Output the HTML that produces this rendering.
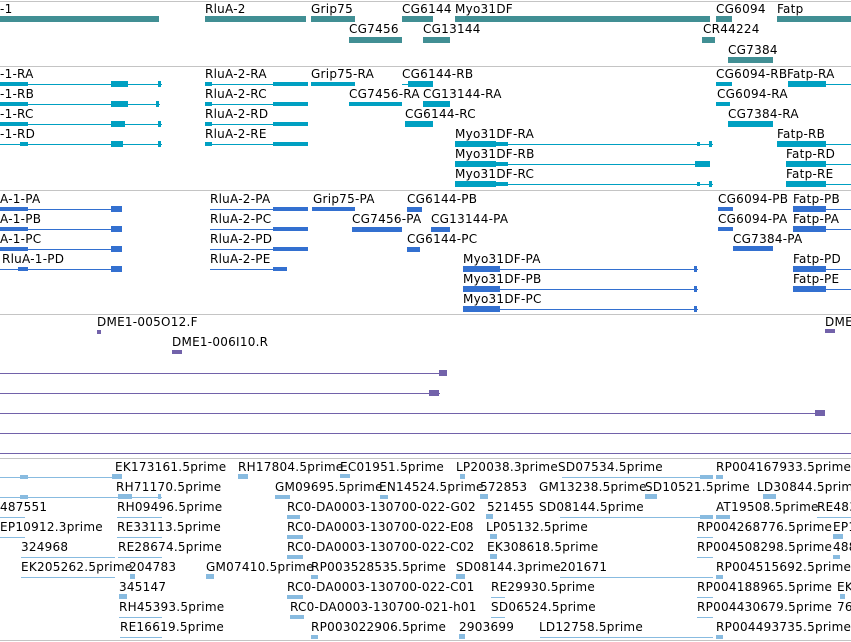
<!DOCTYPE html>
<html><head><meta charset="utf-8"><style>
body{margin:0;width:851px;height:642px;overflow:hidden;background:#fff;position:relative;font-family:"DejaVu Sans","Liberation Sans",sans-serif}
i{position:absolute;display:block}
s{position:absolute;font-size:12px;line-height:14px;letter-spacing:0.25px;white-space:nowrap;text-decoration:none;color:#000}
.sep{left:0;width:851px;height:1px;background:#c4c4c4}
.g{background:#418f94}.r{background:#00a0c2}.p{background:#3370d0}.v{background:#7262aa}.e{background:#88bbe0}
</style></head><body>
<i class="sep" style="top:1px"></i>
<i class="sep" style="top:66px"></i>
<i class="sep" style="top:190px"></i>
<i class="sep" style="top:314px"></i>
<i class="sep" style="top:458px"></i>
<i class="sep" style="top:640px"></i>

<!-- genes -->
<s style="left:0;top:2px">-1</s><s style="left:205px;top:2px">RluA-2</s><s style="left:311px;top:2px">Grip75</s><s style="left:402px;top:2px">CG6144</s><s style="left:455px;top:2px">Myo31DF</s><s style="left:716px;top:2px">CG6094</s><s style="left:777px;top:2px">Fatp</s>
<s style="left:349px;top:22px">CG7456</s><s style="left:423px;top:22px">CG13144</s><s style="left:703px;top:22px">CR44224</s><s style="left:728px;top:43px">CG7384</s>
<i class="g" style="left:0;top:16px;width:159px;height:6px"></i>
<i class="g" style="left:205px;top:16px;width:101px;height:6px"></i>
<i class="g" style="left:311px;top:16px;width:44px;height:6px"></i>
<i class="g" style="left:402px;top:16px;width:31px;height:6px"></i>
<i class="g" style="left:455px;top:16px;width:255px;height:6px"></i>
<i class="g" style="left:716px;top:16px;width:16px;height:6px"></i>
<i class="g" style="left:777px;top:16px;width:74px;height:6px"></i>
<i class="g" style="left:349px;top:37px;width:53px;height:6px"></i>
<i class="g" style="left:423px;top:37px;width:27px;height:6px"></i>
<i class="g" style="left:702px;top:37px;width:13px;height:6px"></i>
<i class="g" style="left:728px;top:57px;width:45px;height:6px"></i>

<!-- transcripts -->
<s style="left:0;top:67px">-1-RA</s><s style="left:205px;top:67px">RluA-2-RA</s><s style="left:311px;top:67px">Grip75-RA</s><s style="left:402px;top:67px">CG6144-RB</s><s style="left:716px;top:67px">CG6094-RB</s><s style="left:787px;top:67px">Fatp-RA</s>
<s style="left:0;top:87px">-1-RB</s><s style="left:205px;top:87px">RluA-2-RC</s><s style="left:349px;top:87px">CG7456-RA</s><s style="left:423px;top:87px">CG13144-RA</s><s style="left:717px;top:87px">CG6094-RA</s>
<s style="left:0;top:107px">-1-RC</s><s style="left:205px;top:107px">RluA-2-RD</s><s style="left:405px;top:107px">CG6144-RC</s><s style="left:728px;top:107px">CG7384-RA</s>
<s style="left:0;top:127px">-1-RD</s><s style="left:205px;top:127px">RluA-2-RE</s><s style="left:455px;top:127px">Myo31DF-RA</s><s style="left:777px;top:127px">Fatp-RB</s>
<s style="left:455px;top:147px">Myo31DF-RB</s><s style="left:786px;top:147px">Fatp-RD</s>
<s style="left:455px;top:167px">Myo31DF-RC</s><s style="left:786px;top:167px">Fatp-RE</s>

<i class="r" style="left:0;top:84px;width:162px;height:1px"></i><i class="r" style="left:0;top:82px;width:28px;height:4px"></i><i class="r" style="left:111px;top:81px;width:17px;height:6px"></i><i class="r" style="left:158px;top:81px;width:3px;height:6px"></i>
<i class="r" style="left:0;top:104px;width:160px;height:1px"></i><i class="r" style="left:0;top:102px;width:28px;height:4px"></i><i class="r" style="left:111px;top:101px;width:17px;height:6px"></i><i class="r" style="left:156px;top:101px;width:3px;height:6px"></i>
<i class="r" style="left:0;top:124px;width:162px;height:1px"></i><i class="r" style="left:0;top:122px;width:28px;height:4px"></i><i class="r" style="left:111px;top:121px;width:14px;height:6px"></i><i class="r" style="left:158px;top:121px;width:3px;height:6px"></i>
<i class="r" style="left:0;top:144px;width:162px;height:1px"></i><i class="r" style="left:20px;top:142px;width:8px;height:4px"></i><i class="r" style="left:111px;top:141px;width:12px;height:6px"></i><i class="r" style="left:158px;top:141px;width:3px;height:6px"></i>
<i class="r" style="left:205px;top:84px;width:103px;height:1px"></i><i class="r" style="left:205px;top:82px;width:7px;height:4px"></i><i class="r" style="left:273px;top:82px;width:35px;height:4px"></i>
<i class="r" style="left:205px;top:104px;width:103px;height:1px"></i><i class="r" style="left:205px;top:102px;width:7px;height:4px"></i><i class="r" style="left:273px;top:102px;width:35px;height:4px"></i>
<i class="r" style="left:205px;top:124px;width:103px;height:1px"></i><i class="r" style="left:205px;top:122px;width:7px;height:4px"></i><i class="r" style="left:273px;top:122px;width:35px;height:4px"></i>
<i class="r" style="left:205px;top:144px;width:103px;height:1px"></i><i class="r" style="left:205px;top:142px;width:7px;height:4px"></i><i class="r" style="left:273px;top:142px;width:35px;height:4px"></i>
<i class="r" style="left:311px;top:82px;width:44px;height:4px"></i>
<i class="r" style="left:402px;top:84px;width:31px;height:1px"></i><i class="r" style="left:408px;top:81px;width:25px;height:6px"></i>
<i class="r" style="left:349px;top:102px;width:53px;height:4px"></i><i class="r" style="left:423px;top:101px;width:27px;height:6px"></i>
<i class="r" style="left:405px;top:121px;width:28px;height:6px"></i>
<i class="r" style="left:716px;top:82px;width:16px;height:4px"></i><i class="r" style="left:716px;top:102px;width:14px;height:4px"></i>
<i class="r" style="left:728px;top:121px;width:45px;height:6px"></i>
<i class="r" style="left:788px;top:84px;width:63px;height:1px"></i><i class="r" style="left:788px;top:81px;width:38px;height:6px"></i>
<i class="r" style="left:777px;top:144px;width:74px;height:1px"></i><i class="r" style="left:777px;top:141px;width:49px;height:6px"></i>
<i class="r" style="left:786px;top:164px;width:65px;height:1px"></i><i class="r" style="left:786px;top:161px;width:40px;height:6px"></i>
<i class="r" style="left:786px;top:184px;width:65px;height:1px"></i><i class="r" style="left:786px;top:181px;width:40px;height:6px"></i>
<i class="r" style="left:455px;top:144px;width:258px;height:1px"></i><i class="r" style="left:455px;top:141px;width:41px;height:6px"></i><i class="r" style="left:496px;top:142px;width:12px;height:4px"></i><i class="r" style="left:697px;top:142px;width:3px;height:4px"></i><i class="r" style="left:709px;top:141px;width:3px;height:6px"></i>
<i class="r" style="left:455px;top:164px;width:255px;height:1px"></i><i class="r" style="left:455px;top:161px;width:41px;height:6px"></i><i class="r" style="left:496px;top:162px;width:12px;height:4px"></i><i class="r" style="left:695px;top:161px;width:15px;height:6px"></i>
<i class="r" style="left:455px;top:184px;width:258px;height:1px"></i><i class="r" style="left:455px;top:181px;width:41px;height:6px"></i><i class="r" style="left:496px;top:182px;width:12px;height:4px"></i><i class="r" style="left:697px;top:182px;width:3px;height:4px"></i><i class="r" style="left:709px;top:181px;width:3px;height:6px"></i>

<!-- proteins -->
<s style="left:0;top:192px">A-1-PA</s><s style="left:210px;top:192px">RluA-2-PA</s><s style="left:313px;top:192px">Grip75-PA</s><s style="left:407px;top:192px">CG6144-PB</s><s style="left:718px;top:192px">CG6094-PB</s><s style="left:793px;top:192px">Fatp-PB</s>
<s style="left:0;top:212px">A-1-PB</s><s style="left:210px;top:212px">RluA-2-PC</s><s style="left:352px;top:212px">CG7456-PA</s><s style="left:431px;top:212px">CG13144-PA</s><s style="left:718px;top:212px">CG6094-PA</s><s style="left:793px;top:212px">Fatp-PA</s>
<s style="left:0;top:232px">A-1-PC</s><s style="left:210px;top:232px">RluA-2-PD</s><s style="left:407px;top:232px">CG6144-PC</s><s style="left:733px;top:232px">CG7384-PA</s>
<s style="left:2px;top:252px">RluA-1-PD</s><s style="left:210px;top:252px">RluA-2-PE</s><s style="left:463px;top:252px">Myo31DF-PA</s><s style="left:793px;top:252px">Fatp-PD</s>
<s style="left:463px;top:272px">Myo31DF-PB</s><s style="left:793px;top:272px">Fatp-PE</s>
<s style="left:463px;top:292px">Myo31DF-PC</s>

<i class="p" style="left:0;top:209px;width:122px;height:1px"></i><i class="p" style="left:0;top:207px;width:28px;height:4px"></i><i class="p" style="left:111px;top:206px;width:11px;height:6px"></i>
<i class="p" style="left:0;top:229px;width:122px;height:1px"></i><i class="p" style="left:0;top:227px;width:28px;height:4px"></i><i class="p" style="left:111px;top:226px;width:11px;height:6px"></i>
<i class="p" style="left:0;top:249px;width:122px;height:1px"></i><i class="p" style="left:0;top:247px;width:28px;height:4px"></i><i class="p" style="left:111px;top:246px;width:11px;height:6px"></i>
<i class="p" style="left:0;top:269px;width:122px;height:1px"></i><i class="p" style="left:18px;top:267px;width:10px;height:4px"></i><i class="p" style="left:111px;top:266px;width:11px;height:6px"></i>
<i class="p" style="left:210px;top:209px;width:98px;height:1px"></i><i class="p" style="left:273px;top:207px;width:35px;height:4px"></i>
<i class="p" style="left:210px;top:229px;width:98px;height:1px"></i><i class="p" style="left:273px;top:227px;width:35px;height:4px"></i>
<i class="p" style="left:210px;top:249px;width:98px;height:1px"></i><i class="p" style="left:273px;top:247px;width:35px;height:4px"></i>
<i class="p" style="left:210px;top:269px;width:77px;height:1px"></i><i class="p" style="left:273px;top:267px;width:14px;height:4px"></i>
<i class="p" style="left:312px;top:207px;width:43px;height:4px"></i>
<i class="p" style="left:352px;top:227px;width:50px;height:5px"></i>
<i class="p" style="left:407px;top:207px;width:15px;height:5px"></i><i class="p" style="left:431px;top:227px;width:19px;height:5px"></i><i class="p" style="left:407px;top:247px;width:13px;height:5px"></i>
<i class="p" style="left:718px;top:207px;width:15px;height:4px"></i><i class="p" style="left:718px;top:227px;width:15px;height:4px"></i>
<i class="p" style="left:733px;top:246px;width:40px;height:5px"></i>
<i class="p" style="left:793px;top:209px;width:58px;height:1px"></i><i class="p" style="left:793px;top:206px;width:33px;height:6px"></i>
<i class="p" style="left:793px;top:229px;width:58px;height:1px"></i><i class="p" style="left:793px;top:226px;width:33px;height:6px"></i>
<i class="p" style="left:793px;top:269px;width:58px;height:1px"></i><i class="p" style="left:793px;top:266px;width:33px;height:6px"></i>
<i class="p" style="left:793px;top:289px;width:58px;height:1px"></i><i class="p" style="left:793px;top:286px;width:33px;height:6px"></i>
<i class="p" style="left:463px;top:269px;width:235px;height:1px"></i><i class="p" style="left:463px;top:266px;width:37px;height:6px"></i><i class="p" style="left:694px;top:266px;width:3px;height:6px"></i>
<i class="p" style="left:463px;top:289px;width:235px;height:1px"></i><i class="p" style="left:463px;top:286px;width:37px;height:6px"></i><i class="p" style="left:694px;top:286px;width:3px;height:6px"></i>
<i class="p" style="left:463px;top:309px;width:235px;height:1px"></i><i class="p" style="left:463px;top:306px;width:37px;height:6px"></i><i class="p" style="left:694px;top:306px;width:3px;height:6px"></i>

<!-- purple -->
<s style="left:97px;top:315px">DME1-005O12.F</s><s style="left:172px;top:335px">DME1-006I10.R</s><s style="left:825px;top:315px">DME1</s>
<i class="v" style="left:97px;top:330px;width:4px;height:4px"></i>
<i class="v" style="left:172px;top:350px;width:10px;height:4px"></i>
<i class="v" style="left:825px;top:329px;width:10px;height:4px"></i>
<i class="v" style="left:0;top:373px;width:440px;height:1px"></i><i class="v" style="left:439px;top:370px;width:8px;height:6px"></i>
<i class="v" style="left:0;top:393px;width:440px;height:1px"></i><i class="v" style="left:429px;top:390px;width:10px;height:6px"></i>
<i class="v" style="left:0;top:413px;width:825px;height:1px"></i><i class="v" style="left:815px;top:410px;width:10px;height:6px"></i>
<i class="v" style="left:0;top:433px;width:851px;height:1px"></i>
<i class="v" style="left:0;top:453px;width:851px;height:1px"></i>

<!-- ESTs -->
<s style="left:115px;top:460px">EK173161.5prime</s><s style="left:238px;top:460px">RH17804.5prime</s><s style="left:340px;top:460px">EC01951.5prime</s><s style="left:456px;top:460px">LP20038.3prime</s><s style="left:558px;top:460px">SD07534.5prime</s><s style="left:716px;top:460px">RP004167933.5prime</s>
<s style="left:116px;top:480px">RH71170.5prime</s><s style="left:275px;top:480px">GM09695.5prime</s><s style="left:379px;top:480px">EN14524.5prime</s><s style="left:480px;top:480px">572853</s><s style="left:539px;top:480px">GM13238.5prime</s><s style="left:645px;top:480px">SD10521.5prime</s><s style="left:757px;top:480px">LD30844.5prime</s>
<s style="left:0;top:500px">487551</s><s style="left:117px;top:500px">RH09496.5prime</s><s style="left:287px;top:500px">RC0-DA0003-130700-022-G02</s><s style="left:487px;top:500px">521455</s><s style="left:539px;top:500px">SD08144.5prime</s><s style="left:716px;top:500px">AT19508.5prime</s><s style="left:817px;top:500px">RE483</s>
<s style="left:0;top:520px">EP10912.3prime</s><s style="left:117px;top:520px">RE33113.5prime</s><s style="left:287px;top:520px">RC0-DA0003-130700-022-E08</s><s style="left:486px;top:520px">LP05132.5prime</s><s style="left:697px;top:520px">RP004268776.5prime</s><s style="left:833px;top:520px">EP1</s>
<s style="left:21px;top:540px">324968</s><s style="left:118px;top:540px">RE28674.5prime</s><s style="left:287px;top:540px">RC0-DA0003-130700-022-C02</s><s style="left:487px;top:540px">EK308618.5prime</s><s style="left:697px;top:540px">RP004508298.5prime</s><s style="left:833px;top:540px">488</s>
<s style="left:21px;top:560px">EK205262.5prime</s><s style="left:129px;top:560px">204783</s><s style="left:206px;top:560px">GM07410.5prime</s><s style="left:311px;top:560px">RP003528535.5prime</s><s style="left:456px;top:560px">SD08144.3prime</s><s style="left:560px;top:560px">201671</s><s style="left:716px;top:560px">RP004515692.5prime</s>
<s style="left:119px;top:580px">345147</s><s style="left:287px;top:580px">RC0-DA0003-130700-022-C01</s><s style="left:491px;top:580px">RE29930.5prime</s><s style="left:697px;top:580px">RP004188965.5prime</s><s style="left:837px;top:580px">EK</s>
<s style="left:119px;top:600px">RH45393.5prime</s><s style="left:290px;top:600px">RC0-DA0003-130700-021-h01</s><s style="left:491px;top:600px">SD06524.5prime</s><s style="left:697px;top:600px">RP004430679.5prime</s><s style="left:837px;top:600px">76</s>
<s style="left:120px;top:620px">RE16619.5prime</s><s style="left:311px;top:620px">RP003022906.5prime</s><s style="left:459px;top:620px">2903699</s><s style="left:539px;top:620px">LD12758.5prime</s><s style="left:716px;top:620px">RP004493735.5prime</s>

<i class="e" style="left:0;top:477px;width:122px;height:1px"></i><i class="e" style="left:20px;top:475px;width:8px;height:4px"></i><i class="e" style="left:112px;top:474px;width:10px;height:5px"></i>
<i class="e" style="left:238px;top:474px;width:10px;height:5px"></i><i class="e" style="left:340px;top:474px;width:10px;height:4px"></i><i class="e" style="left:460px;top:474px;width:5px;height:5px"></i>
<i class="e" style="left:562px;top:477px;width:151px;height:1px"></i><i class="e" style="left:700px;top:475px;width:13px;height:4px"></i><i class="e" style="left:716px;top:475px;width:7px;height:4px"></i>
<i class="e" style="left:0;top:497px;width:162px;height:1px"></i><i class="e" style="left:20px;top:495px;width:8px;height:4px"></i><i class="e" style="left:118px;top:494px;width:14px;height:5px"></i><i class="e" style="left:158px;top:494px;width:3px;height:5px"></i>
<i class="e" style="left:275px;top:495px;width:15px;height:4px"></i><i class="e" style="left:380px;top:495px;width:8px;height:4px"></i><i class="e" style="left:480px;top:494px;width:8px;height:5px"></i><i class="e" style="left:645px;top:494px;width:12px;height:5px"></i><i class="e" style="left:763px;top:494px;width:13px;height:5px"></i>
<i class="e" style="left:0;top:517px;width:25px;height:1px"></i><i class="e" style="left:117px;top:517px;width:45px;height:1px"></i><i class="e" style="left:287px;top:515px;width:13px;height:4px"></i><i class="e" style="left:486px;top:514px;width:7px;height:5px"></i><i class="e" style="left:560px;top:517px;width:153px;height:1px"></i><i class="e" style="left:700px;top:515px;width:13px;height:4px"></i><i class="e" style="left:716px;top:515px;width:14px;height:4px"></i><i class="e" style="left:817px;top:517px;width:34px;height:1px"></i>
<i class="e" style="left:0;top:537px;width:25px;height:1px"></i><i class="e" style="left:117px;top:537px;width:45px;height:1px"></i><i class="e" style="left:287px;top:535px;width:16px;height:4px"></i><i class="e" style="left:490px;top:534px;width:7px;height:5px"></i><i class="e" style="left:697px;top:537px;width:16px;height:1px"></i><i class="e" style="left:833px;top:534px;width:10px;height:5px"></i>
<i class="e" style="left:21px;top:557px;width:94px;height:1px"></i><i class="e" style="left:118px;top:557px;width:44px;height:1px"></i><i class="e" style="left:287px;top:555px;width:16px;height:4px"></i><i class="e" style="left:490px;top:554px;width:7px;height:5px"></i><i class="e" style="left:697px;top:557px;width:16px;height:1px"></i><i class="e" style="left:833px;top:555px;width:7px;height:4px"></i>
<i class="e" style="left:21px;top:577px;width:94px;height:1px"></i><i class="e" style="left:130px;top:574px;width:5px;height:5px"></i><i class="e" style="left:206px;top:574px;width:8px;height:5px"></i><i class="e" style="left:311px;top:575px;width:7px;height:4px"></i><i class="e" style="left:456px;top:574px;width:9px;height:5px"></i><i class="e" style="left:560px;top:577px;width:153px;height:1px"></i><i class="e" style="left:716px;top:575px;width:7px;height:4px"></i>
<i class="e" style="left:119px;top:594px;width:8px;height:5px"></i><i class="e" style="left:287px;top:595px;width:16px;height:4px"></i><i class="e" style="left:491px;top:597px;width:14px;height:1px"></i><i class="e" style="left:697px;top:597px;width:16px;height:1px"></i><i class="e" style="left:840px;top:594px;width:5px;height:5px"></i>
<i class="e" style="left:119px;top:617px;width:43px;height:1px"></i><i class="e" style="left:290px;top:615px;width:14px;height:4px"></i><i class="e" style="left:491px;top:617px;width:14px;height:1px"></i><i class="e" style="left:697px;top:617px;width:16px;height:1px"></i>
<i class="e" style="left:120px;top:637px;width:42px;height:1px"></i><i class="e" style="left:311px;top:635px;width:7px;height:4px"></i><i class="e" style="left:459px;top:634px;width:6px;height:5px"></i><i class="e" style="left:540px;top:637px;width:173px;height:1px"></i><i class="e" style="left:716px;top:635px;width:7px;height:4px"></i>
</body></html>
